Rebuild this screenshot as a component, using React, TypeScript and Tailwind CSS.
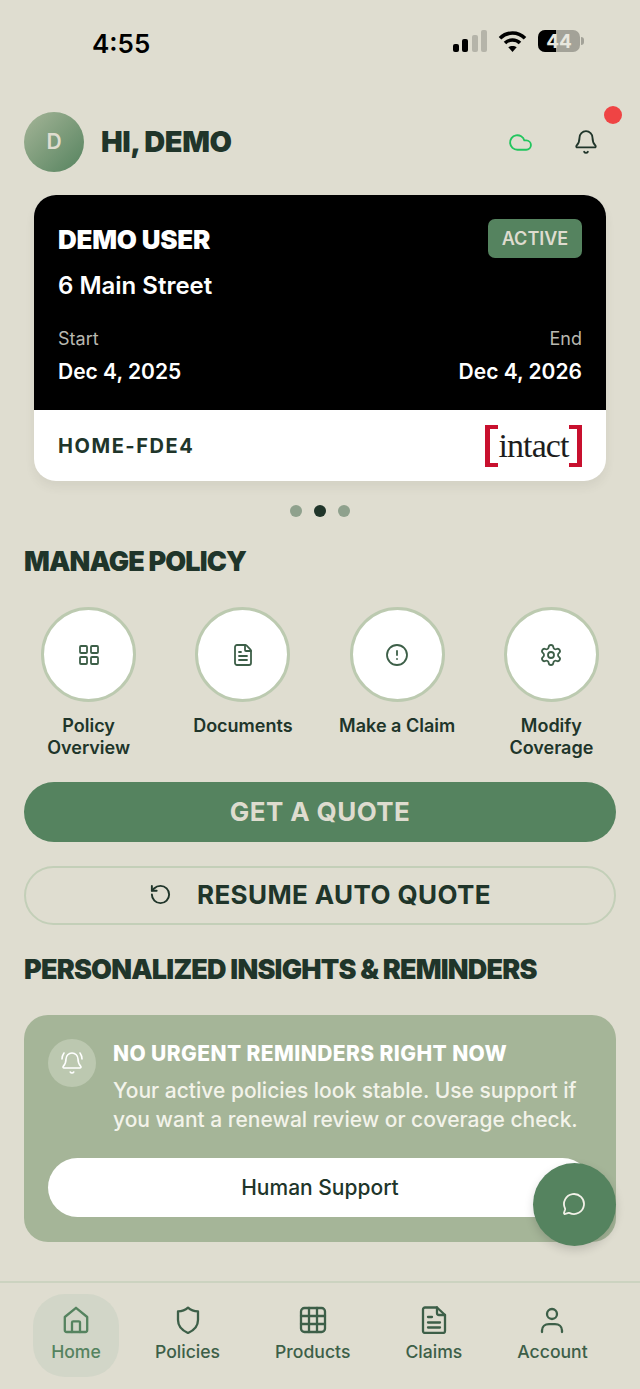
import { AlertCircle, Bell, BellRing, Cloud, FileText, LayoutGrid, MessageCircle, RotateCcw, Settings } from 'lucide-react';
import type { ReactNode } from 'react';

const actions = [
    { label: 'Policy Overview', icon: LayoutGrid },
    { label: 'Documents', icon: FileText },
    { label: 'Make a Claim', icon: AlertCircle },
    { label: 'Modify Coverage', icon: Settings },
];

function NavIcon({ children }: { children: ReactNode }) {
    return (
        <svg width="28" height="28" viewBox="0 0 28 28" fill="none" stroke="currentColor" strokeWidth="2.3" strokeLinecap="round" strokeLinejoin="round">
            {children}
        </svg>
    );
}

const tabs = [
    {
        label: 'Home',
        active: true,
        icon: (
            <NavIcon>
                <path d="M14 1.8 2.8 11V24a2 2 0 0 0 2 2H23.2a2 2 0 0 0 2-2V11Z" />
                <path d="M10 26V16.5a1.2 1.2 0 0 1 1.2-1.2h5.6a1.2 1.2 0 0 1 1.2 1.2V26" />
            </NavIcon>
        ),
    },
    {
        label: 'Policies',
        active: false,
        icon: (
            <NavIcon>
                <path d="M14 1.6C16.5 3.8 20 5.2 24 5.4V14C24 20 19.5 24.6 14 27C8.5 24.6 4 20 4 14V5.4C8 5.2 11.5 3.8 14 1.6Z" />
            </NavIcon>
        ),
    },
    {
        label: 'Products',
        active: false,
        icon: (
            <NavIcon>
                <rect x="2" y="2" width="24" height="24" rx="3.5" />
                <path d="M10 2V26M18 2V26M2 10H26M2 18H26" />
            </NavIcon>
        ),
    },
    {
        label: 'Claims',
        active: false,
        icon: (
            <NavIcon>
                <path d="M5 1.5H17L25 9V25a2 2 0 0 1-2 2H5a2 2 0 0 1-2-2V3.5a2 2 0 0 1 2-2Z" />
                <path d="M17 1.5V7a2 2 0 0 0 2 2H25" />
                <path d="M8 11H12M8 16.5H20M8 21.5H20" />
            </NavIcon>
        ),
    },
    {
        label: 'Account',
        active: false,
        icon: (
            <NavIcon>
                <circle cx="14" cy="8" r="5" />
                <path d="M4 26V24.5C4 20.5 7 18.2 11 18.2H17C21 18.2 24 20.5 24 24.5V26" />
            </NavIcon>
        ),
    },
];

function StatusBar() {
    return (
        <div className="flex h-[112px] items-start justify-between pl-[92px] pr-[56px] pt-[27px]">
            <span className="text-[26px] leading-[34px] font-semibold text-black">4:55</span>
            <div className="flex items-center gap-[11px] pt-[3px]">
                <svg width="34" height="22" viewBox="0 0 34 22">
                    <rect x="0" y="14" width="6" height="8" rx="2" fill="#000" />
                    <rect x="9" y="9" width="6" height="13" rx="2" fill="#000" />
                    <rect x="19" y="5" width="6" height="17" rx="2" fill="#b5b4a9" />
                    <rect x="28" y="0" width="6" height="22" rx="2" fill="#b5b4a9" />
                </svg>
                <svg width="29" height="22" viewBox="0 0 28 22" fill="none" stroke="#000" strokeWidth="3.6">
                    <path d="M1.5 8.2C8.5 1.2 19.5 1.2 26.5 8.2" />
                    <path d="M6.5 13C10.6 9 17.4 9 21.5 13" />
                    <path d="M14 22 9.8 17.3C12 15.4 16 15.4 18.2 17.3Z" fill="#000" stroke="none" />
                </svg>
                <div className="flex items-center gap-[1px]">
                    <div className="relative flex h-[22px] w-[42px] items-center justify-center overflow-hidden rounded-[7px] bg-[#a3a298]">
                        <div className="absolute inset-y-0 left-0 w-[18px] bg-black" />
                        <span className="relative text-[19px] leading-none font-bold text-[#e8e7de]">44</span>
                    </div>
                    <div className="h-[8px] w-[3px] rounded-r-full bg-[#a3a298]" />
                </div>
            </div>
        </div>
    );
}

function PolicyCard() {
    return (
        <div className="mx-[34px] h-[286px] overflow-hidden rounded-[22px] bg-white shadow-[0_6px_10px_rgba(80,80,60,0.08)]">
            <div className="flex h-[215px] flex-col bg-black px-[24px] pt-[24px]">
                <div className="flex items-start justify-between">
                    <div className="pt-[5px] text-[26px] leading-[32px] font-black tracking-[-0.25px] text-white">DEMO USER</div>
                    <div className="flex h-[39px] w-[94px] items-center justify-center rounded-[7px] bg-[#55835f] text-[18px] font-semibold text-[#dedccf]">ACTIVE</div>
                </div>
                <div className="mt-[13px] text-[24px] leading-[30px] font-semibold text-white">6 Main Street</div>
                <div className="mt-[27px] flex justify-between">
                    <div>
                        <div className="text-[18px] leading-[22px] text-[#b9b8b0]">Start</div>
                        <div className="mt-[9px] text-[21px] leading-[26px] font-semibold text-white">Dec 4, 2025</div>
                    </div>
                    <div className="text-right">
                        <div className="text-[18px] leading-[22px] text-[#b9b8b0]">End</div>
                        <div className="mt-[9px] text-[21px] leading-[26px] font-semibold text-white">Dec 4, 2026</div>
                    </div>
                </div>
            </div>
            <div className="flex h-[71px] items-center justify-between pl-[24px] pr-[24px]">
                <span className="text-[20px] font-bold tracking-[1.55px] text-[#20352a]">HOME-FDE4</span>
                <div className="relative flex h-[42px] w-[97px] items-center justify-center border-x-[5px] border-[#c8102e]">
                    <div className="absolute left-0 top-0 h-[4px] w-[8px] bg-[#c8102e]" />
                    <div className="absolute left-0 bottom-0 h-[4px] w-[8px] bg-[#c8102e]" />
                    <div className="absolute right-0 top-0 h-[4px] w-[8px] bg-[#c8102e]" />
                    <div className="absolute right-0 bottom-0 h-[4px] w-[8px] bg-[#c8102e]" />
                    <span className="text-[34px] leading-none tracking-[-0.9px] text-[#1d1d1d] [font-family:'Liberation_Serif',serif]">intact</span>
                </div>
            </div>
        </div>
    );
}

export default function App() {
    return (
        <div className="relative h-[1389px] w-[640px] overflow-hidden bg-[#dfddd0] [font-family:Inter,sans-serif]">
            <StatusBar />

            <div className="flex h-[60px] items-center px-[24px]">
                <div className="flex h-[60px] w-[60px] items-center justify-center rounded-full bg-gradient-to-br from-[#a5b598] to-[#55835f] text-[21px] font-semibold text-[#dfddd0]">D</div>
                <div className="ml-[17px] text-[29px] font-black tracking-[-0.45px] text-[#20352a]">HI, DEMO</div>
                <div className="ml-auto mr-[17px] flex items-center gap-[40px]">
                    <Cloud size={25} strokeWidth={1.8} className="text-[#22c55e]" />
                    <Bell size={26} strokeWidth={1.7} className="text-[#20352a]" />
                </div>
            </div>
            <div className="absolute left-[604px] top-[106px] h-[18px] w-[18px] rounded-full bg-[#ef4444]" />

            <div className="mt-[23px]">
                <PolicyCard />
            </div>

            <div className="mt-[24px] flex h-[12px] justify-center gap-[12px]">
                <div className="h-[12px] w-[12px] rounded-full bg-[#8fa18d]" />
                <div className="h-[12px] w-[12px] rounded-full bg-[#20352a]" />
                <div className="h-[12px] w-[12px] rounded-full bg-[#8fa18d]" />
            </div>

            <h2 className="mx-[24px] mt-[28px] text-[27px] leading-[34px] font-black tracking-[-0.87px] text-[#20352a]">MANAGE POLICY</h2>

            <div className="mt-[28px] grid grid-cols-4 pl-[11.5px] pr-[11.5px]">
                {actions.map(({ label, icon: Icon }) => (
                    <div key={label} className="flex flex-col items-center">
                        <div className="flex h-[95px] w-[95px] items-center justify-center rounded-full border-[3px] border-[#bccab0] bg-white">
                            <Icon size={24} strokeWidth={1.8} className="text-[#3d5f48]" />
                        </div>
                        <div className="mt-[13px] h-[44px] w-[130px] text-center text-[18px] leading-[22px] font-semibold text-[#20352a]">
                            {label === 'Policy Overview' ? <>Policy<br />Overview</> : label === 'Modify Coverage' ? <>Modify<br />Coverage</> : label}
                        </div>
                    </div>
                ))}
            </div>

            <div className="mx-[24px] mt-[23px] flex h-[60px] items-center justify-center rounded-full bg-[#55835f] pb-[2px] text-[26px] font-bold tracking-[0.4px] text-[#dedccf]">GET A QUOTE</div>

            <div className="mx-[24px] mt-[24px] flex h-[59px] items-center justify-center gap-[25px] rounded-full border-2 border-[#c3cfb8] pb-[2px] text-[26px] font-bold tracking-[0.4px] text-[#20352a]">
                <RotateCcw size={23} strokeWidth={2} />
                RESUME AUTO QUOTE
            </div>

            <h2 className="mx-[24px] mt-[28px] text-[27px] leading-[34px] font-black tracking-[-0.8px] whitespace-nowrap text-[#20352a]">PERSONALIZED INSIGHTS &amp; REMINDERS</h2>

            <div className="mx-[24px] mt-[28px] h-[227px] rounded-[24px] bg-[#a5b598] px-[24px] pt-[24px]">
                <div className="flex gap-[17px]">
                    <div className="flex h-[48px] w-[48px] shrink-0 items-center justify-center rounded-full bg-[#bcc8b0]">
                        <BellRing size={24} strokeWidth={1.6} className="text-white" />
                    </div>
                    <div className="pt-[1px]">
                        <div className="text-[21px] leading-[28px] font-extrabold tracking-[0.4px] whitespace-nowrap text-white">NO URGENT REMINDERS RIGHT NOW</div>
                        <div className="mt-[8px] text-[21px] leading-[29px] font-medium whitespace-nowrap text-[#f3f3ea]">
                            Your active policies look stable. Use support if<br />you want a renewal review or coverage check.
                        </div>
                    </div>
                </div>
                <div className="mt-[24px] flex h-[59px] items-center justify-center rounded-full bg-white pt-[1px] text-[21px] font-medium text-[#20352a]">Human Support</div>
            </div>

            <div className="absolute left-[533px] top-[1163px] flex h-[83px] w-[83px] items-center justify-center rounded-full bg-[#55835f] pb-[2px] pr-[2px] shadow-[0_4px_10px_rgba(0,0,0,0.15)]">
                <MessageCircle size={24} strokeWidth={1.8} className="text-[#f2f1e8]" />
            </div>

            <nav className="absolute inset-x-0 bottom-0 flex h-[108px] items-start gap-[55px] border-t-2 border-[#ccd3c0] pl-[33px] pt-[11px]">
                {tabs.map(({ label, icon, active }) => (
                    <div key={label} className={`flex h-[83px] flex-col items-center pt-[12px] ${active ? '-mr-[19px] w-[86px] rounded-[32px] bg-[#d2d6c8] text-[#55835f]' : 'text-[#3d5f48]'}`}>
                        {icon}
                        <span className="mt-[7px] text-[17.6px] leading-[22px] font-medium">{label}</span>
                    </div>
                ))}
            </nav>
        </div>
    );
}
